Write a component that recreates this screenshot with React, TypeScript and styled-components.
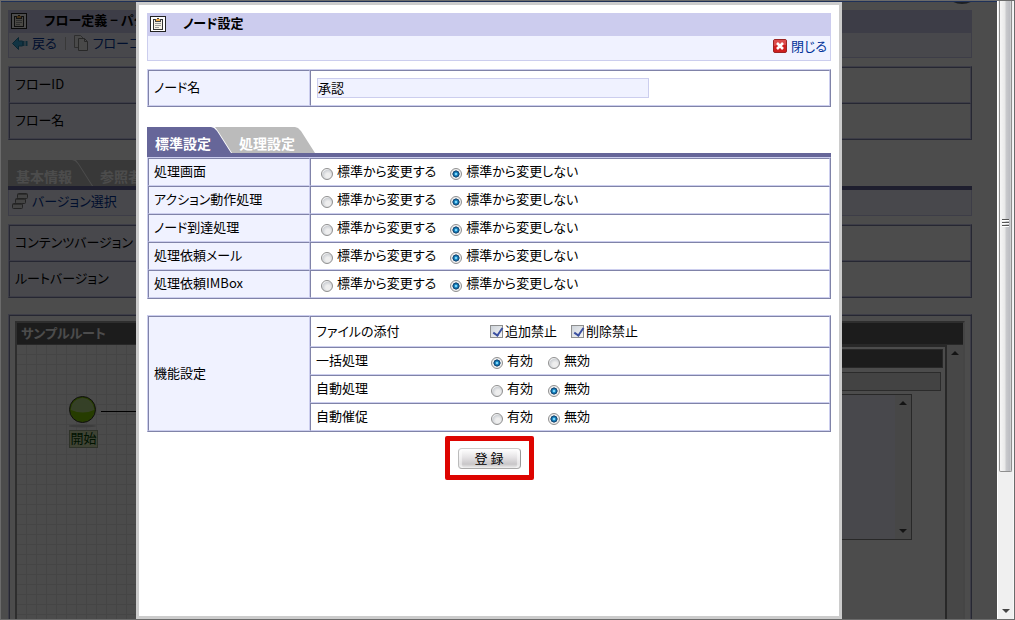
import React from "react";
import styled, { createGlobalStyle, css } from "styled-components";

const line = "#8083a8";
const lightLine = "#ccceee";
const bar = "#666699";
const pale = "#f0f2ff";

const GlobalStyle = createGlobalStyle`
  * { box-sizing: border-box; }
  body {
    margin: 0;
    color: #000;
    font: 13px/16px "Noto Sans CJK JP", sans-serif;
    font-feature-settings: "palt";
  }
  button, input { font: inherit; font-feature-settings: inherit; color: inherit; }
`;

const Window = styled.div`
  display: grid;
  grid-template-columns: minmax(0, 1fr) 17px;
  height: 100vh;
  border: 1px solid #6b6b6b;
  overflow: hidden;
`;

const Viewport = styled.div`
  position: relative;
  border-top: 1px solid #1f3158;
  overflow: hidden;
`;

const Page = styled.div`
  height: 100%;
  padding: 8px 25px 0 7px;
  background: #fff;
  overflow: hidden;
`;

const Overlay = styled.div`
  position: absolute;
  inset: 0;
  display: flex;
  padding: 0 155px 0 135px;
  background: rgba(0, 0, 0, 0.7);
`;

const Dialog = styled.section`
  flex: 1;
  min-width: 0;
  padding: 8px;
  border: 3px solid #ccc;
  background: #fff;
  overflow: hidden;
`;

const TitleBar = styled.header`
  display: flex;
  align-items: flex-start;
  gap: 17px;
  height: 23px;
  padding: 0 3px;
  background: #ccccee;
  white-space: nowrap;

  svg { margin-top: 3px; }
`;

const Title = styled.h1`
  margin: 0;
  font-size: 13px;
  line-height: 19px;
`;

const ToolBar = styled.div<{ $end?: boolean; $tall?: boolean }>`
  display: flex;
  align-items: center;
  justify-content: ${(p) => (p.$end ? "flex-end" : "flex-start")};
  gap: 8px;
  height: ${(p) => (p.$tall ? 26 : 25)}px;
  padding: 0 3px 4px;
  border: solid ${lightLine};
  border-width: 0 1px 1px;
  background: ${pale};
  white-space: nowrap;
`;

const ToolLink = styled.a`
  display: inline-flex;
  align-items: center;
  gap: 4px;
  color: #003399;
  text-decoration: none;
`;

const Separator = styled.span`
  width: 1px;
  height: 13px;
  background: #bbb;
`;

const FormTable = styled.table<{ $top?: number }>`
  width: 100%;
  margin-top: ${(p) => p.$top ?? 0}px;
  table-layout: fixed;
  border-collapse: separate;
  border-spacing: 0;
  border: 1px solid;
  border-color: ${lightLine} ${line} ${line} ${lightLine};
`;

const cell = css`
  border: 1px solid;
  border-color: ${line} ${lightLine} ${lightLine} ${line};
  text-align: left;
  font-weight: normal;
  vertical-align: middle;
  white-space: nowrap;
`;

const HeadCell = styled.th<{ $height?: number }>`
  ${cell}
  width: 162px;
  height: ${(p) => p.$height ?? 28}px;
  padding: 0 5px 2px;
  background: ${pale};
`;

const Cell = styled.td<{ $height?: number }>`
  ${cell}
  height: ${(p) => p.$height ?? 28}px;
  padding: 0 5px;
`;

const NameInput = styled.input`
  display: block;
  width: 332px;
  height: 20px;
  margin-left: 1px;
  padding: 0 0 2px;
  border: 1px solid ${lightLine};
  background: ${pale};
  outline: none;
`;

const Tabs = styled.div<{ $top: number }>`
  display: flex;
  height: 30px;
  margin-top: ${(p) => p.$top}px;
  border-bottom: 4px solid ${bar};
`;

const Tab = styled.button<{ $active?: boolean }>`
  flex: none;
  width: 84px;
  height: 26px;
  padding: 6px 0 0 8px;
  border: 0;
  background: ${(p) => (p.$active ? bar : "#bbb")};
  color: #fff;
  font-size: 14px;
  line-height: 16px;
  font-weight: bold;
  text-align: left;
  white-space: nowrap;
  clip-path: polygon(0 0, 64px 0, 67px 1px, 70px 4px, 84px 26px, 0 26px);

  & + & {
    width: 101px;
    margin-left: -17px;
    padding-left: 25px;
    clip-path: polygon(1px 0, 81px 0, 84px 1px, 87px 4px, 101px 26px, 18px 26px, 4px 4px);
  }
`;

const Choices = styled.div<{ $offset?: boolean }>`
  display: flex;
  align-items: center;
  gap: ${(p) => (p.$offset ? 13 : 14)}px;
  padding-left: ${(p) => (p.$offset ? 4 : 0)}px;
`;

const Choice = styled.label`
  display: inline-flex;
  align-items: center;
`;

const ChoiceText = styled.span`
  padding-bottom: 3px;
`;

const Radio = styled.input`
  appearance: none;
  width: 12px;
  height: 12px;
  margin: 3px 4px 0 1px;
  border: 1px solid #8f8f8f;
  border-radius: 50%;
  background: radial-gradient(circle at 60% 65%, #eee 0 25%, #cfd2d6 60%, #fff 75%);

  &:checked {
    background: radial-gradient(circle at 50% 50%, #8ee0ff 0 8%, #1c8cc8 22%, #0c3a66 46%, #eee 54%);
  }
`;

const Check = styled.input`
  appearance: none;
  width: 13px;
  height: 13px;
  margin: 0 2px 0 0;
  border: 1px solid #8e8f8f;
  background: linear-gradient(135deg, #cdd3da, #f6f6f6);
  position: relative;

  &:checked::after {
    content: "";
    position: absolute;
    left: 4px;
    top: 0;
    width: 4px;
    height: 8px;
    border: solid #3a4fa0;
    border-width: 0 2px 2px 0;
    transform: rotate(35deg);
  }
`;

const CheckText = styled.span`
  padding-bottom: 2px;
`;

const FeatureRow = styled.div`
  display: grid;
  grid-template-columns: 174px 1fr;
  align-items: center;
`;

const Actions = styled.div`
  display: flex;
  justify-content: center;
  padding-top: 4px;
`;

const Highlight = styled.div`
  padding: 7px 8px 6px;
  border: 5px solid #dd0400;
  border-radius: 2px;
`;

const Submit = styled.button`
  display: block;
  width: 63px;
  height: 21px;
  padding: 0 0 2px;
  border: 1px solid;
  border-color: #ccc #999 #aaa #bbb;
  border-radius: 4px;
  background: linear-gradient(#fff, #e4e2e4 45%, #c8c6c8 80%, #eee);
  box-shadow: inset 3px 0 1px #fff8, inset -3px 0 1px #fff8;
  line-height: 16px;
  white-space: pre;
`;

const RouteFrame = styled.div`
  height: 400px;
  margin-top: 16px;
  padding: 5px 6px 0;
  border: 1px solid;
  border-color: ${lightLine} ${line} ${line} ${lightLine};
  box-shadow: inset 1px 1px ${line}, inset -1px 0 ${lightLine};
`;

const Designer = styled.div`
  height: 100%;
  margin-top: 1px;
  border: 2px solid #999;
  border-right-color: #e8e8e8;
`;

const DesignerTitle = styled.h2`
  height: 21px;
  margin: 0;
  padding: 2px 4px;
  background: #606060;
  color: #fff;
  font-size: 13px;
  line-height: 16px;
`;

const DesignerBody = styled.div`
  display: grid;
  grid-template-columns: 1fr 200px 16px;
  height: 100%;
  border-top: 1px solid #888;
`;

const Canvas = styled.div`
  position: relative;
  background-color: #fafafa;
  background-image: linear-gradient(90deg, transparent 9px, #e8e8e8 9px),
    linear-gradient(transparent 9px, #e8e8e8 9px);
  background-size: 10px 10px;
`;

const StartNode = styled.div`
  position: absolute;
  left: 52px;
  top: 51px;
`;

const NodeLabel = styled.div`
  position: relative;
  width: 29px;
  height: 18px;
  margin-top: -6px;
  border: 1px solid #9aa88a;
  background: #d4e0b0;
  color: #004000;
  line-height: 14px;
  text-align: center;
`;

const SidePanel = styled.div`
  padding: 2px;
  border: 2px solid #888;
  border-left: 0;
`;

const PanelHead = styled.div`
  height: 19px;
  border: 1px solid #888;
  background: #606060;
`;

const PanelField = styled.div`
  height: 19px;
  margin: 4px 2px 3px 0;
  border: 1px solid #909090;
  background: #e2e2e2;
`;

const PanelList = styled.div`
  display: flex;
  justify-content: flex-end;
  height: 146px;
  margin-right: 31px;
  border: 1px solid #888;
  background: #f0f2ff;
`;

const ScrollTrack = styled.div`
  display: flex;
  flex-direction: column;
  justify-content: space-between;
  align-items: center;
  width: 16px;
  padding: 6px 0;
  background: #eee;
`;

const Orb = styled.span`
  position: absolute;
  top: -17px;
  right: 21px;
  width: 28px;
  height: 19px;
  border-radius: 50%;
  background: #1c1f22;
`;

const Scrollbar = styled.div`
  display: flex;
  flex-direction: column;
  justify-content: space-between;
  align-items: center;
  padding: 0 1px 6px;
  border-right: 1px solid #f8f8f8;
  border-left: 1px solid #fff;
  background: #f0f0f0;
`;

const Thumb = styled.div`
  display: grid;
  place-items: center;
  width: 100%;
  height: 77%;
  padding-bottom: 26px;
  border: 1px solid #8f8f8f;
  border-top: 0;
  border-radius: 0 0 2px 2px;
  background: linear-gradient(90deg, #f6f6f6, #e8e8e8 45%, #c9cacd 55%, #bcbdc2 90%, #ddd);
`;

const ClipboardIcon = () => (
  <svg width="16" height="16" viewBox="0 0 16 16" aria-hidden="true" shapeRendering="crispEdges">
    <rect x="0.5" y="0.5" width="15" height="15" fill="#fff" stroke="#222" />
    <path d="M3 3h10v11H3z" fill="#333" />
    <path d="M4 4h8v9H4z" fill="#f4f0e4" />
    <path d="M6 3h4v2H6z" fill="#e8a848" />
    <path d="M7 2h2v1H7zM5 3h1v2h4v-2h1v3H5z" fill="#444" />
    <path d="M5 7.500h6M5 9.500h6M5 11.500h4" stroke="#999" />
  </svg>
);

const CloseIcon = () => (
  <svg width="14" height="14" viewBox="0 0 14 14" aria-hidden="true">
    <rect x="0.5" y="0.5" width="13" height="13" rx="1.5" fill="#cf2020" stroke="#9c2525" />
    <path d="M1 1h12v5q-6-1-12 1z" fill="#e46a6a" opacity=".6" />
    <path d="M4 4l6 6M10 4l-6 6" stroke="#fff" strokeWidth="2.6" />
  </svg>
);

const BackIcon = () => (
  <svg width="16" height="13" viewBox="0 0 16 13" aria-hidden="true">
    <path d="M.5 6.500L6.500.5v3.500h4v5h-4v3.500z" fill="#3fb0e0" stroke="#267fa8" />
    <path d="M11.500 4v5M14.500 4v5" stroke="#3590bb" strokeWidth="2" />
  </svg>
);

const CopyIcon = () => (
  <svg width="15" height="16" viewBox="0 0 15 16" aria-hidden="true">
    <path d="M.5.500h6l3 3v9h-9z" fill="#f3f3f3" stroke="#999" />
    <path d="M4.500 3.500h6l3 3v9h-9z" fill="#f3f3f3" stroke="#888" />
    <path d="M10.500 3.500v3h3" fill="none" stroke="#888" />
  </svg>
);

const VersionIcon = () => (
  <svg width="16" height="16" viewBox="0 0 16 16" aria-hidden="true">
    {[[5, 0], [3, 5], [0, 10]].map(([x, y]) => (
      <g key={y}>
        <rect x={x + 0.5} y={y + 0.5} width="10" height="5" rx="1" fill="#e5e5e5" stroke="#777" />
        <path d={`M${x + 1} ${y + 1.5}h9`} stroke="#999" />
      </g>
    ))}
  </svg>
);

const Arrow = ({ down }: { down?: boolean }) => (
  <svg width="8" height="4" viewBox="0 0 8 4" aria-hidden="true">
    <path d={down ? "M0 0h8L4 4z" : "M0 4h8L4 0z"} fill="#444" />
  </svg>
);

const GripIcon = () => (
  <svg width="8" height="9" viewBox="0 0 8 9" aria-hidden="true" shapeRendering="crispEdges">
    <path d="M0 .5h7M0 3.500h7M0 6.500h7" stroke="#555" />
    <path d="M0 1.500h7M0 4.500h7M0 7.500h7" stroke="#fff" />
  </svg>
);

const StartArt = styled.svg`
  display: block;
`;

const StartIcon = () => (
  <StartArt width="90" height="40" viewBox="0 0 90 40" aria-hidden="true">
    <ellipse cx="13" cy="30" rx="14" ry="1.500" fill="#ccc" />
    <circle cx="13.500" cy="13.500" r="13" fill="#80c800" stroke="#333" />
    <path d="M2 14a11.500 12 0 0 1 23 0q-11 5-23 0z" fill="#c4dcae" opacity=".75" />
    <path d="M32 15.500h58" stroke="#000" />
  </StartArt>
);

const screens = ["処理画面", "アクション動作処理", "ノード到達処理", "処理依頼メール", "処理依頼IMBox"];
const features = [
  { name: "一括処理", on: true },
  { name: "自動処理", on: false },
  { name: "自動催促", on: false },
];

const Option = ({ group, text, on }: { group: string; text: string; on: boolean }) => (
  <Choice>
    <Radio type="radio" name={group} defaultChecked={on} />
    <ChoiceText>{text}</ChoiceText>
  </Choice>
);

const BackgroundTable = ({ rows, top }: { rows: string[]; top: number }) => (
  <FormTable $top={top}>
    <tbody>
      {rows.map((row) => (
        <tr key={row}>
          <HeadCell scope="row" $height={36}>{row}</HeadCell>
          <Cell $height={36} />
        </tr>
      ))}
    </tbody>
  </FormTable>
);

export default function App() {
  return (
    <>
      <GlobalStyle />
      <Window>
        <Viewport>
          <Page>
            <TitleBar>
              <ClipboardIcon />
              <Title as="h2">フロー定義 − パターン</Title>
            </TitleBar>
            <ToolBar>
              <ToolLink href="#back"><BackIcon />戻る</ToolLink>
              <Separator />
              <ToolLink href="#copy"><CopyIcon />フローコピー</ToolLink>
            </ToolBar>
            <BackgroundTable top={8} rows={["フローID", "フロー名"]} />
            <Tabs $top={20}>
              <Tab type="button">基本情報</Tab>
              <Tab type="button">参照者</Tab>
            </Tabs>
            <ToolBar $tall>
              <ToolLink href="#version"><VersionIcon />バージョン選択</ToolLink>
            </ToolBar>
            <BackgroundTable top={8} rows={["コンテンツバージョン", "ルートバージョン"]} />
            <RouteFrame>
              <Designer>
                <DesignerTitle>サンプルルート</DesignerTitle>
                <DesignerBody>
                  <Canvas>
                    <StartNode>
                      <StartIcon />
                      <NodeLabel>開始</NodeLabel>
                    </StartNode>
                  </Canvas>
                  <SidePanel>
                    <PanelHead />
                    <PanelField />
                    <PanelList>
                      <ScrollTrack><Arrow /><Arrow down /></ScrollTrack>
                    </PanelList>
                  </SidePanel>
                  <ScrollTrack><Arrow /></ScrollTrack>
                </DesignerBody>
              </Designer>
            </RouteFrame>
          </Page>
          <Overlay>
            <Dialog role="dialog" aria-labelledby="dialog-title">
              <TitleBar>
                <ClipboardIcon />
                <Title id="dialog-title">ノード設定</Title>
              </TitleBar>
              <ToolBar $end>
                <ToolLink href="#close"><CloseIcon />閉じる</ToolLink>
              </ToolBar>
              <FormTable $top={8}>
                <tbody>
                  <tr>
                    <HeadCell scope="row" $height={36}><label htmlFor="node-name">ノード名</label></HeadCell>
                    <Cell $height={36}><NameInput id="node-name" defaultValue="承認" /></Cell>
                  </tr>
                </tbody>
              </FormTable>
              <Tabs $top={20}>
                <Tab type="button" $active>標準設定</Tab>
                <Tab type="button">処理設定</Tab>
              </Tabs>
              <FormTable>
                <tbody>
                  {screens.map((name) => (
                    <tr key={name}>
                      <HeadCell scope="row">{name}</HeadCell>
                      <Cell>
                        <Choices $offset>
                          <Option group={name} text="標準から変更する" on={false} />
                          <Option group={name} text="標準から変更しない" on />
                        </Choices>
                      </Cell>
                    </tr>
                  ))}
                </tbody>
              </FormTable>
              <FormTable $top={16}>
                <tbody>
                  <tr>
                    <HeadCell scope="rowgroup" rowSpan={4}>機能設定</HeadCell>
                    <Cell $height={31}>
                      <FeatureRow>
                        <CheckText>ファイルの添付</CheckText>
                        <Choices>
                          <Choice><Check type="checkbox" defaultChecked /><CheckText>追加禁止</CheckText></Choice>
                          <Choice><Check type="checkbox" defaultChecked /><CheckText>削除禁止</CheckText></Choice>
                        </Choices>
                      </FeatureRow>
                    </Cell>
                  </tr>
                  {features.map((f) => (
                    <tr key={f.name}>
                      <Cell>
                        <FeatureRow>
                          <ChoiceText>{f.name}</ChoiceText>
                          <Choices>
                            <Option group={f.name} text="有効" on={f.on} />
                            <Option group={f.name} text="無効" on={!f.on} />
                          </Choices>
                        </FeatureRow>
                      </Cell>
                    </tr>
                  ))}
                </tbody>
              </FormTable>
              <Actions>
                <Highlight><Submit type="button">登 録</Submit></Highlight>
              </Actions>
            </Dialog>
          </Overlay>
          <Orb />
        </Viewport>
        <Scrollbar>
          <Thumb><GripIcon /></Thumb>
          <Arrow down />
        </Scrollbar>
      </Window>
    </>
  );
}
